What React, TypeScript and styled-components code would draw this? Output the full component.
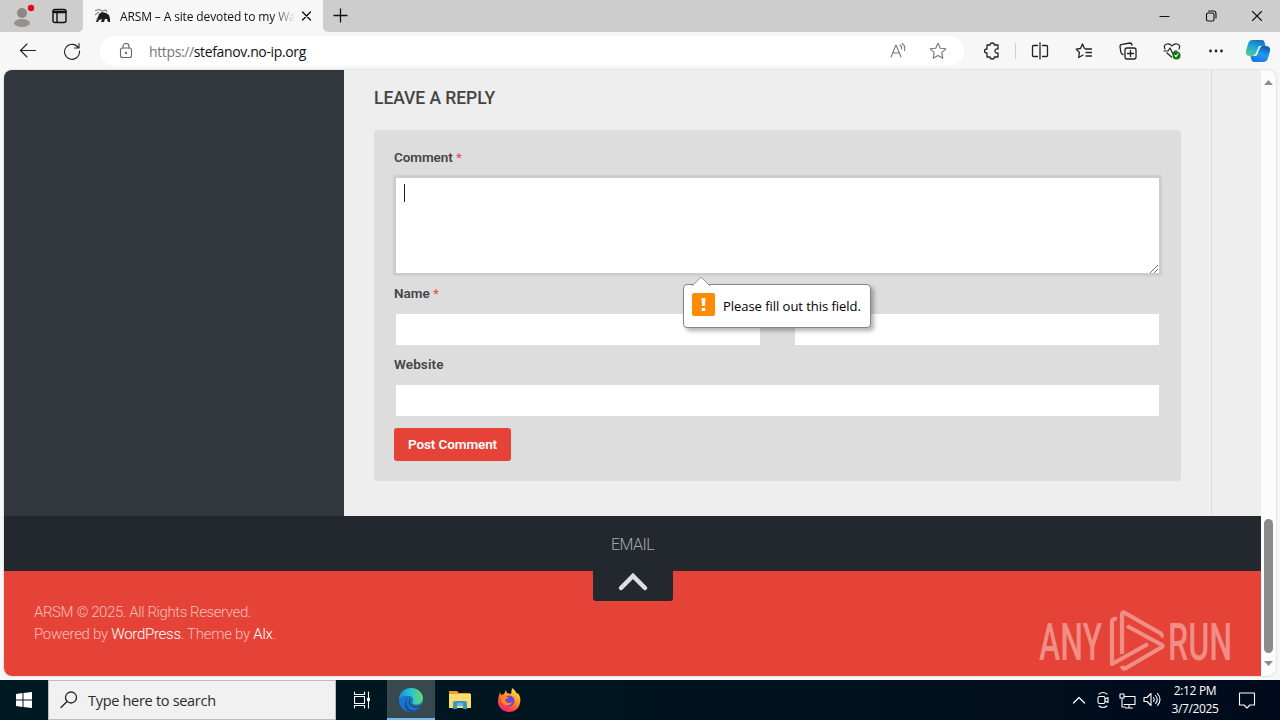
import React from 'react';
import styled, { createGlobalStyle } from 'styled-components';

// styles
const GlobalStyle = createGlobalStyle`
  * {
    box-sizing: border-box;
  }
  body {
    margin: 0;
    overflow: hidden;
    font-family: "Open Sans", "Noto Sans", sans-serif;
  }
  svg {
    display: block;
    flex: none;
  }
`;

const StyledScreen = styled.div`
  width: 1280px;
  height: 720px;
  display: flex;
  flex-direction: column;
  overflow: hidden;
  background: #f7f7f7;
`;

const StyledTabStrip = styled.div`
  height: 32px;
  flex: none;
  display: flex;
  align-items: stretch;
  background: #f7f7f7;
`;

const StyledProfileArea = styled.div`
  width: 83px;
  display: flex;
  align-items: center;
  padding-left: 11px;
  gap: 13px;
  background: #cdcdcd;
  border-bottom-right-radius: 5px;
`;

const StyledTab = styled.div`
  width: 240px;
  display: flex;
  align-items: center;
  padding: 0 8px 0 11px;
  color: #111;
`;

const StyledTabTitle = styled.div`
  width: 176px;
  margin: 0 1px 0 9px;
  font-size: 12px;
  letter-spacing: -0.13px;
  white-space: nowrap;
  overflow: hidden;
  mask-image: linear-gradient(to right, #000 152px, transparent 176px);
`;

const StyledTabClose = styled.div`
  padding-top: 2px;
`;

const StyledWindowArea = styled.div`
  flex: 1;
  display: flex;
  align-items: center;
  justify-content: space-between;
  padding: 0 17px 0 10px;
  background: #cdcdcd;
  border-bottom-left-radius: 5px;
`;

const StyledWindowButtons = styled.div`
  display: flex;
  gap: 34px;
`;

const StyledToolbar = styled.div`
  height: 38px;
  flex: none;
  display: flex;
  align-items: center;
  padding: 0 9px 0 19px;
`;

const StyledNavButtons = styled.div`
  width: 81px;
  display: flex;
  gap: 26px;
`;

const StyledAddressBar = styled.div`
  width: 864px;
  height: 30px;
  display: flex;
  align-items: center;
  padding: 0 17px 0 18px;
  border-radius: 15px;
  background: #fff;
`;

const StyledUrl = styled.div`
  flex: 1;
  margin-left: 15px;
  font-size: 14px;
  letter-spacing: -0.37px;
  color: #111;
`;

const StyledMuted = styled.span`
  color: #767676;
`;

const StyledAddressActions = styled.div`
  display: flex;
  gap: 22px;
`;

const StyledToolIcons = styled.div`
  display: flex;
  align-items: center;
  gap: 26px;
  margin-left: 19px;
`;

const StyledToolDivider = styled.div`
  width: 1px;
  height: 16px;
  margin: 0 -11px 0 -12px;
  background: #d0d0d0;
`;

const StyledCopilot = styled.div`
  margin-left: -6px;
`;

const StyledViewport = styled.div`
  width: 1272px;
  height: 606px;
  flex: none;
  display: flex;
  margin-left: 4px;
  border-radius: 8px;
  overflow: hidden;
  background: #fcfcfc;
  box-shadow: 0 0 2px rgba(0, 0, 0, 0.25);
`;

const StyledPage = styled.div`
  width: 1257px;
  display: flex;
  flex-direction: column;
  font-family: Roboto, "Open Sans", sans-serif;
`;

const StyledContent = styled.div`
  height: 446px;
  flex: none;
  display: flex;
  background: #eee;
`;

const StyledSidebar = styled.div`
  width: 340px;
  background: #32373e;
`;

const StyledMain = styled.div`
  width: 868px;
  padding: 16px 30px 0;
  border-right: 1px solid #dcdcdc;
`;

const StyledHeading = styled.h3`
  height: 24px;
  margin: 0 0 20px;
  font-size: 17.5px;
  line-height: 24px;
  font-weight: 500;
  letter-spacing: -0.05px;
  color: #444;
`;

const StyledForm = styled.div`
  width: 807px;
  height: 351px;
  padding: 17px 20px;
  background: #ddd;
  border-radius: 3px;
`;

const StyledLabel = styled.div<{ $spacing?: number }>`
  height: 20px;
  font-size: 13.5px;
  line-height: 20px;
  font-weight: 600;
  letter-spacing: ${(props) => props.$spacing ?? 0}px;
  color: #444;
`;

const StyledRequired = styled.span`
  font-weight: 400;
  color: #e04a4a;
`;

const StyledTextArea = styled.div`
  position: relative;
  width: 767px;
  height: 99px;
  margin: 9px 0 8px;
  padding: 8px 8px;
  background: #fff;
  border: 2px solid #ccc;
  box-shadow: 0 0 2px rgba(0, 0, 0, 0.2);
`;

const StyledCaret = styled.div`
  width: 1px;
  height: 18px;
  margin-top: -2px;
  background: #222;
`;

const StyledGrip = styled.svg`
  position: absolute;
  right: 0;
  bottom: -1px;
`;

const StyledFieldRow = styled.div`
  display: flex;
  justify-content: space-between;
  margin: 11px 2px 9px;
`;

const StyledInput = styled.div<{ $wide?: boolean }>`
  width: ${(props) => (props.$wide ? 763 : 364)}px;
  height: 31px;
  background: #fff;
`;

const StyledSubmit = styled.button`
  width: 117px;
  height: 33px;
  display: block;
  margin-top: 12px;
  padding: 0 0 1px;
  border: 0;
  border-radius: 3px;
  background: #e64338;
  color: #fff;
  font: 600 13.5px Roboto, sans-serif;
  letter-spacing: -0.1px;
`;

const StyledTooltip = styled.div`
  position: absolute;
  left: 287px;
  top: 106px;
  z-index: 2;
  width: 188px;
  height: 44px;
  display: flex;
  align-items: center;
  gap: 8px;
  padding: 0 8px 4px;
  background: #fff;
  border: 1px solid #858585;
  border-radius: 4px;
  box-shadow: 3px 3px 4px rgba(0, 0, 0, 0.3);
  font-family: "Open Sans", sans-serif;
  font-size: 13px;
  white-space: nowrap;
  color: #000;
`;

const StyledTooltipArrow = styled.svg`
  position: absolute;
  left: 8px;
  top: -9px;
`;

const StyledTooltipText = styled.span`
  padding-top: 4px;
  letter-spacing: -0.04px;
`;

const StyledFooterNav = styled.div`
  position: relative;
  height: 55px;
  flex: none;
  padding: 18px 0 0 607px;
  background: #23282e;
  font-size: 16px;
  line-height: 22px;
  font-weight: 300;
  letter-spacing: -0.5px;
  color: #a6a9ab;
`;

const StyledBackToTop = styled.div`
  position: absolute;
  left: 589px;
  top: 55px;
  width: 80px;
  height: 30px;
  display: flex;
  justify-content: center;
  background: #23282e;
  border-radius: 0 0 3px 3px;
`;

const StyledFooterBottom = styled.div`
  flex: 1;
  display: flex;
  justify-content: space-between;
  padding: 30px 27px 0 30px;
  background: #e64338;
  font-size: 15px;
  line-height: 22px;
  font-weight: 300;
  color: #f7bfbb;
`;

const StyledCredit = styled.div<{ $spacing: number }>`
  letter-spacing: ${(props) => props.$spacing}px;
`;

const StyledLink = styled.span`
  color: #fff;
`;

const StyledLogo = styled.div`
  padding-top: 7px;
`;

const StyledScrollbar = styled.div`
  flex: 1;
  display: flex;
  flex-direction: column;
  align-items: center;
  padding: 10px 0 10px;
`;

const StyledThumb = styled.div`
  width: 9px;
  height: 134px;
  margin: auto 0 8px;
  border-radius: 5px;
  background: #8b8b8b;
`;

const StyledTaskbar = styled.div`
  height: 40px;
  flex: none;
  display: flex;
  margin-top: 4px;
  background: linear-gradient(to right, #001821 0, #001520 45%, #000a1c 100%);
`;

const StyledTaskButton = styled.div<{ $active?: boolean }>`
  width: ${(props) => (props.$active ? 48 : 49)}px;
  display: flex;
  align-items: center;
  justify-content: center;
  background: ${(props) => (props.$active ? '#37494f' : 'transparent')};
  box-shadow: ${(props) => (props.$active ? 'inset 0 -2px #76b9ed' : 'none')};
`;

const StyledStart = styled.div`
  width: 48px;
  display: flex;
  align-items: center;
  justify-content: center;
`;

const StyledSearch = styled.div`
  width: 288px;
  display: flex;
  align-items: center;
  gap: 10px;
  margin-right: 2px;
  padding-left: 11px;
  border: 1px solid #bcbcbc;
  background: #f1f1f1;
  font-size: 14.5px;
  letter-spacing: -0.3px;
  color: #2b2b2b;
`;

const StyledTray = styled.div`
  display: flex;
  align-items: center;
  gap: 7px;
  margin-left: auto;
  padding-right: 24px;
`;

const StyledClock = styled.div`
  width: 56px;
  margin-left: -1px;
  font-size: 12px;
  line-height: 18px;
  letter-spacing: -0.35px;
  text-align: center;
  white-space: nowrap;
  color: #fff;
`;

const StyledNotification = styled.div`
  margin-left: 8px;
`;

// line drawing shared by the browser and tray icons
interface GlyphProps {
    size?: number;
    color?: string;
    weight?: number;
    children: React.ReactNode;
}

const Glyph: React.FC<GlyphProps> = ({
    size = 18, color = '#222', weight = 1.1, children,
}) => (
    <svg
        width={size}
        height={size}
        viewBox={`0 0 ${size} ${size}`}
        fill="none"
        stroke={color}
        strokeWidth={weight}
        strokeLinecap="round"
        strokeLinejoin="round"
    >
        {children}
    </svg>
);

const ProfileIcon: React.FC = () => (
    <svg width="25" height="28" viewBox="0 0 25 28">
        <circle cx="11" cy="11" r="5" fill="#8c8783" />
        <ellipse cx="11" cy="21" rx="8" ry="4" fill="#96918d" />
        <circle cx="20" cy="6" r="3.2" fill="#e00b1c" />
    </svg>
);

const Favicon: React.FC = () => (
    <svg width="17" height="18" viewBox="0 0 17 18">
        <path d="M1 3.500l4-1 3 1.500 4-1 1 2M1 8l4-3M3 12l3-4" stroke="#888" strokeWidth="1.200" fill="none" />
        <path d="M2 14l2-4 2-1" stroke="#999" strokeWidth="1" fill="none" />
        <path d="M5 7l3-2 4 1 3 2 1 4v3h-2l-1-3-2 0-1 3H7l1-3-3 1-1 2H2l2-4z" fill="#1c1c1c" />
    </svg>
);

const CopilotIcon: React.FC = () => (
    <svg width="26" height="24" viewBox="0 0 26 24">
        <defs>
            <linearGradient id="copilotLeft" x1="0.5" y1="0" x2="0.2" y2="1">
                <stop offset="0" stopColor="#1674c4" />
                <stop offset="0.45" stopColor="#20aadc" />
                <stop offset="1" stopColor="#54ce82" />
            </linearGradient>
            <linearGradient id="copilotRight" x1="0.7" y1="0" x2="0.3" y2="1">
                <stop offset="0" stopColor="#1256bf" />
                <stop offset="0.5" stopColor="#209de8" />
                <stop offset="1" stopColor="#1672ed" />
            </linearGradient>
        </defs>
        <path d="M8 1h9q2 0 2.500 2l1 4h-3q-2 0-3 3l-2 5q-1 2-3 2H5q-5 0-4-5l2-7q1-4 5-4z" fill="url(#copilotLeft)" />
        <path d="M18 23H9q-2 0-2.500-2l-1-4h3q2 0 3-3l2-5q1-2 3-2H20q6 0 5 5l-2 7q-1 4-5 4z" fill="url(#copilotRight)" />
        <path d="M14 7h3q-2 1-3 4l-2 5q-.7 1-2 1H7.500q3-1 4-4z" fill="#f8fbfc" />
    </svg>
);

const EdgeIcon: React.FC = () => (
    <svg width="26" height="26" viewBox="0 0 26 26">
        <defs>
            <linearGradient id="edgeTop" x1="0" y1="0.4" x2="1" y2="0.4">
                <stop offset="0" stopColor="#168fd5" />
                <stop offset="0.5" stopColor="#2cc1d5" />
                <stop offset="1" stopColor="#65dc62" />
            </linearGradient>
        </defs>
        <circle cx="13" cy="13" r="12" fill="#1775cf" />
        <path d="M1 13C1 5 7 1 13 1c7 0 12 5 12 10 0 4-3 6.500-7 6.500-3 0-4-1-3.500-2 1.500-2 1-6-3.500-6.500C6 8.500 2 10 1 13z" fill="url(#edgeTop)" />
        <path d="M10.500 11c-3 2-3 8 1 11 4 2.500 9 1 11.500-3-2 4.500-6 6-9 6-5 0-8-5-7-9 .5-3 2-4.500 3.500-5z" fill="#104f9d" />
        <path d="M13 11c-2 2-1.500 6 2 7.500 3 1.300 6 .5 8-1 .8-.5 1.300.2 1 .8-.3.500-.6 1-1 1.700-4 2-10 1-12-3-1-3 0-5 2-6z" fill="#37494f" />
    </svg>
);

const FolderIcon: React.FC = () => (
    <svg width="22" height="20" viewBox="0 0 22 20">
        <path d="M0 1h8l2 2h11v6H0z" fill="#e8a326" />
        <path d="M0 4h22v14H0z" fill="#fddb6d" />
        <path d="M4 13q0-2 2-2h10q2 0 2 2v6h-4v-3H8v3H4z" fill="#3a96c8" />
        <path d="M8 13h6v3H8z" fill="#65b5e3" />
    </svg>
);

const FirefoxIcon: React.FC = () => (
    <svg width="24" height="25" viewBox="0 0 24 25">
        <defs>
            <linearGradient id="foxBody" x1="0.8" y1="0" x2="0.2" y2="1">
                <stop offset="0" stopColor="#fff04a" />
                <stop offset="0.45" stopColor="#ff8c22" />
                <stop offset="0.8" stopColor="#ff3652" />
                <stop offset="1" stopColor="#e92183" />
            </linearGradient>
        </defs>
        <path d="M3 4l1 3 3-1 2-4 1 3 4 1 1-6c3 2 4 4 5 6l1-1c2 3 3 6 2 10-1 6-6 9-11 9S1 20 1 14c0-4 1-7 2-10z" fill="url(#foxBody)" />
        <circle cx="12" cy="13" r="5.500" fill="#7147d6" />
        <path d="M4 9c3-2 6-1 8 1-2 0-3 1-4 2 1 3 4 4 7 2-1 4-8 5-10 0z" fill="#ff8a20" />
    </svg>
);

const AnyRunLogo: React.FC = () => (
    <svg width="198" height="66" viewBox="0 0 198 66" opacity="0.5">
        <g fill="#fbd6d2" fontFamily="Roboto, sans-serif" fontSize="51" fontWeight="500">
            <text x="3" y="51.500" textLength="63" lengthAdjust="spacingAndGlyphs">ANY</text>
            <text x="132" y="51.500" textLength="64" lengthAdjust="spacingAndGlyphs">RUN</text>
        </g>
        <g fill="none" stroke="#fbd6d2" strokeWidth="4.200" strokeLinejoin="round">
            <path d="M81 11q-5-1-5 3v42l36-20" />
            <path d="M86 46V7q0-4 3-2l35 20q3 2 1 4" />
            <path d="M91 18l35 19q1 1 0 2L90 60q-3 2-4-2" />
        </g>
    </svg>
);

const App: React.FC = () => (
    <StyledScreen>
        <GlobalStyle />
        <StyledTabStrip>
            <StyledProfileArea>
                <ProfileIcon />
                <Glyph size={20} color="#111" weight={1.4}>
                    <rect x="4" y="3.500" width="13" height="13" rx="2" />
                    <path d="M4.500 6h12" strokeWidth="2.400" />
                    <path d="M8 6v10" />
                </Glyph>
            </StyledProfileArea>
            <StyledTab>
                <Favicon />
                <StyledTabTitle>ARSM – A site devoted to my Wa</StyledTabTitle>
                <StyledTabClose>
                    <Glyph size={20} color="#111" weight={1.3}>
                        <path d="M7.500 13l8-8M7.500 5l8 8" />
                    </Glyph>
                </StyledTabClose>
            </StyledTab>
            <StyledWindowArea>
                <Glyph size={16} color="#111" weight={1.3}>
                    <path d="M1 7.500h13M7.500 1v13" />
                </Glyph>
                <StyledWindowButtons>
                    <Glyph size={12} color="#111">
                        <path d="M1 6.500h9" />
                    </Glyph>
                    <Glyph size={12} color="#111">
                        <rect x="1.500" y="3" width="7.500" height="8" rx="1.500" />
                        <path d="M3.500 1h5Q11 1 11 4v4" />
                    </Glyph>
                    <Glyph size={12} color="#111">
                        <path d="M1.500 1.500l9 9M1.500 10.500l9-9" />
                    </Glyph>
                </StyledWindowButtons>
            </StyledWindowArea>
        </StyledTabStrip>

        <StyledToolbar>
            <StyledNavButtons>
                <Glyph>
                    <path d="M1.500 8.500h15M8 2L1.500 8.500 8 15" />
                </Glyph>
                <Glyph>
                    <path d="M15.500 6A7.500 7.500 0 1 0 16.500 9M16 1.500V6h-4.500" />
                </Glyph>
            </StyledNavButtons>
            <StyledAddressBar>
                <Glyph size={16} color="#666">
                    <rect x="2.500" y="5" width="11" height="9.500" rx="2" />
                    <path d="M5 5V3.500a3 3 0 0 1 6 0V5" />
                    <circle cx="8" cy="10" r="0.600" fill="#666" />
                </Glyph>
                <StyledUrl>
                    <StyledMuted>https://</StyledMuted>
                    stefanov.no-ip.org
                </StyledUrl>
                <StyledAddressActions>
                    <Glyph color="#777">
                        <path d="M2 15L7 3l5 12M4 11h6M11 3c1.500 1 2 2.500 1.500 4M13 1.500c3 2 3.500 4 2.500 7" />
                    </Glyph>
                    <Glyph color="#777">
                        <path d="M9 1.200l2.300 5 5.500.6-4 3.800 1 5.700L9 13.600l-4.800 2.700 1-5.700-4-3.800 5.500-.6z" />
                    </Glyph>
                </StyledAddressActions>
            </StyledAddressBar>
            <StyledToolIcons>
                <Glyph weight={1.300}>
                    <path d="M4 3h3q0-2 2.200-2t2.200 2H15v4q-3-.5-3 2t3 2v4h-3.600q0 2-2.200 2T7 15H4v-4q-2.500 0-2.500-2T4 7z" />
                </Glyph>
                <StyledToolDivider />
                <Glyph weight={1.300}>
                    <path d="M9 1v16M6.500 3.500h-4q-1 0-1 1v9q0 1 1 1h4M11.500 3.500h4q1 0 1 1v9q0 1-1 1h-4" />
                </Glyph>
                <Glyph weight={1.300}>
                    <path d="M10.500 7h6M11 10.500h5.500M11 14h5.500M9.500 6.500L7.500 2l-2 4.500-4.300.6 3.200 3.400L3.700 15.500 8 13" />
                </Glyph>
                <Glyph weight={1.300}>
                    <rect x="6" y="6" width="11" height="11" rx="2" />
                    <path d="M11.500 8.500v6M8.500 11.500h6M4 12.500Q2 12 1.800 10L1 4.500q0-2 2-2.200L11 1q1.500 0 2 2" />
                </Glyph>
                <Glyph weight={1.200}>
                    <path d="M2 7Q0 3 4 2q3-.5 5 2 2-2.500 5-2 4 1 2 5M1 9h4l2-3 3 6 2-3h2M4 11l4.500 4" />
                    <circle cx="13.500" cy="13.500" r="4" fill="#107c10" stroke="none" />
                    <path d="M12 13.500l1 1 2-2.500" stroke="#fff" />
                </Glyph>
                <Glyph>
                    <g fill="#222" stroke="none">
                        <circle cx="3.500" cy="9" r="1.400" />
                        <circle cx="9" cy="9" r="1.400" />
                        <circle cx="14.500" cy="9" r="1.400" />
                    </g>
                </Glyph>
                <StyledCopilot><CopilotIcon /></StyledCopilot>
            </StyledToolIcons>
        </StyledToolbar>

        <StyledViewport>
            <StyledPage>
                <StyledContent>
                    <StyledSidebar />
                    <StyledMain>
                        <StyledHeading>LEAVE A REPLY</StyledHeading>
                        <StyledForm>
                            <StyledLabel $spacing={-0.08}>
                                Comment
                                {' '}
                                <StyledRequired>*</StyledRequired>
                            </StyledLabel>
                            <StyledTextArea>
                                <StyledCaret />
                                <StyledGrip width="10" height="10" stroke="#777">
                                    <path d="M1 9l8-8M5 9l4-4" />
                                </StyledGrip>
                                <StyledTooltip>
                                    <StyledTooltipArrow width="18" height="10">
                                        <path d="M0 10l9-9 9 9" fill="#fff" stroke="#999" />
                                    </StyledTooltipArrow>
                                    <svg width="23" height="23" viewBox="0 0 23 23">
                                        <rect width="23" height="23" rx="2" fill="#ff8c00" />
                                        <path d="M9.500 5h4l-.5 8h-3zM9.700 15h3.600v3H9.700z" fill="#fff" />
                                    </svg>
                                    <StyledTooltipText>Please fill out this field.</StyledTooltipText>
                                </StyledTooltip>
                            </StyledTextArea>
                            <StyledLabel $spacing={-0.03}>
                                Name
                                {' '}
                                <StyledRequired>*</StyledRequired>
                            </StyledLabel>
                            <StyledFieldRow>
                                <StyledInput />
                                <StyledInput />
                            </StyledFieldRow>
                            <StyledLabel $spacing={0.12}>Website</StyledLabel>
                            <StyledFieldRow>
                                <StyledInput $wide />
                            </StyledFieldRow>
                            <StyledSubmit>Post Comment</StyledSubmit>
                        </StyledForm>
                    </StyledMain>
                </StyledContent>
                <StyledFooterNav>
                    EMAIL
                    <StyledBackToTop>
                        <svg width="32" height="22" viewBox="0 0 32 22">
                            <path d="M4 17L16 5l12 12" fill="none" stroke="#dedfe0" strokeWidth="4.500" strokeLinecap="round" />
                        </svg>
                    </StyledBackToTop>
                </StyledFooterNav>
                <StyledFooterBottom>
                    <div>
                        <StyledCredit $spacing={-0.41}>ARSM © 2025. All Rights Reserved.</StyledCredit>
                        <StyledCredit $spacing={-0.28}>
                            Powered by
                            {' '}
                            <StyledLink>WordPress</StyledLink>
                            . Theme by
                            {' '}
                            <StyledLink>Alx</StyledLink>
                            .
                        </StyledCredit>
                    </div>
                    <StyledLogo><AnyRunLogo /></StyledLogo>
                </StyledFooterBottom>
            </StyledPage>
            <StyledScrollbar>
                <svg width="9" height="5">
                    <path d="M0 5l4.500-5L9 5z" fill="#8b8b8b" />
                </svg>
                <StyledThumb />
                <svg width="9" height="5">
                    <path d="M0 0l4.500 5L9 0z" fill="#8b8b8b" />
                </svg>
            </StyledScrollbar>
        </StyledViewport>

        <StyledTaskbar>
            <StyledStart>
                <svg width="16" height="16" viewBox="0 0 16 16" fill="#fff">
                    <path d="M0 2l6.500-1v6.500H0zM7.500.9L16 0v7.500H7.500zM0 8.500h6.500V15L0 14zM7.500 8.500H16V16l-8.500-1.100z" />
                </svg>
            </StyledStart>
            <StyledSearch>
                <Glyph weight={1.300}>
                    <circle cx="11" cy="6.500" r="5.500" />
                    <path d="M7 10.500L1 16.500" />
                </Glyph>
                Type here to search
            </StyledSearch>
            <StyledTaskButton>
                <Glyph color="#fff" weight={1.100}>
                    <path d="M0.500 1v2.500h10V1M0.500 17v-2.500h10V17M0.500 5.500h10v7H0.500zM14.500 1v16" />
                    <path d="M13 7h3v3h-3z" fill="#fff" stroke="none" />
                </Glyph>
            </StyledTaskButton>
            <StyledTaskButton $active><EdgeIcon /></StyledTaskButton>
            <StyledTaskButton><FolderIcon /></StyledTaskButton>
            <StyledTaskButton><FirefoxIcon /></StyledTaskButton>
            <StyledTray>
                <Glyph color="#fff" size={16} weight={1.200}>
                    <path d="M2.500 11L8 5.500l5.500 5.500" />
                </Glyph>
                <Glyph color="#fff" size={18}>
                    <rect x="4" y="5.500" width="7" height="7" rx="1.500" />
                    <path d="M11 8l3-1.500v5L11 10M5 3q4-3 8 0M5 15q4 3 8 0" />
                </Glyph>
                <Glyph color="#fff" size={17}>
                    <path d="M5 4.500h11v8H5M10 12.500V16M6.500 16h7M1 2h4v4H1zM3 6v9h3" />
                </Glyph>
                <Glyph color="#fff" size={18}>
                    <path d="M1 6.500h3l4-4v12l-4-4H1zM10.500 6.500q1.500 2 0 4M12.500 4.500q3.500 4 0 8M14.500 2.500q5 6 0 12" />
                </Glyph>
                <StyledClock>
                    <div>2:12 PM</div>
                    <div>3/7/2025</div>
                </StyledClock>
                <StyledNotification>
                    <Glyph color="#fff" size={18}>
                        <path d="M1.500 2h15v12H12l-3 3-3-3H1.500z" />
                    </Glyph>
                </StyledNotification>
            </StyledTray>
        </StyledTaskbar>
    </StyledScreen>
);

export default App;
